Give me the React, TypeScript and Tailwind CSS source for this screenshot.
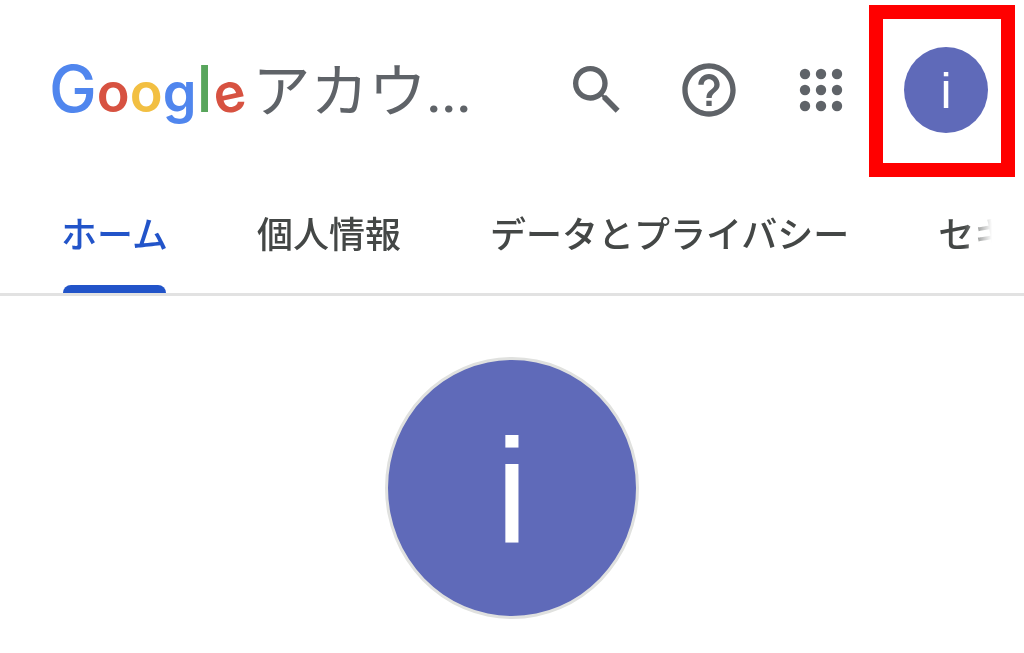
import clsx from "clsx";

const TABS = [
  { label: "ホーム", active: true },
  { label: "個人情報" },
  { label: "データとプライバシー" },
  { label: "セキュリティ" },
];

const DOTS = [5, 21, 37];

function GoogleLogo() {
  return (
    <span className="font-[Inter,sans-serif] text-[54px] leading-[72px] font-semibold">
      <span className="text-[64px] font-medium text-[#5086ee]">G</span>
      <span className="text-[#d75241]">o</span>
      <span className="text-[#f2bf42]">o</span>
      <span className="text-[#5086ee]">g</span>
      <span className="text-[64px] font-medium text-[#58a55c]">l</span>
      <span className="inline-block -rotate-12 leading-none text-[#d75241]">e</span>
    </span>
  );
}

function SearchIcon() {
  return (
    <svg viewBox="0 0 24 24" className="size-16" fill="currentColor" aria-hidden="true">
      <path d="M15.5 14h-.79l-.28-.27A6.47 6.47 0 0 0 16 9.5 6.5 6.5 0 1 0 9.5 16c1.61 0 3.09-.59 4.23-1.57l.27.28v.79l5 4.99L20.49 19l-4.99-5zm-6 0C7.01 14 5 11.99 5 9.5S7.01 5 9.5 5 14 7.01 14 9.5 11.99 14 9.5 14z" />
    </svg>
  );
}

function HelpIcon() {
  return (
    <svg viewBox="0 0 24 24" className="size-16" fill="currentColor" aria-hidden="true">
      <path d="M11 18h2v-2h-2v2zm1-16C6.48 2 2 6.48 2 12s4.48 10 10 10 10-4.48 10-10S17.52 2 12 2zm0 18c-4.41 0-8-3.59-8-8s3.59-8 8-8 8 3.59 8 8-3.59 8-8 8zm0-14c-2.21 0-4 1.79-4 4h2c0-1.1.9-2 2-2s2 .9 2 2c0 2-3 1.75-3 5h2c0-2.25 3-2.5 3-5 0-2.21-1.79-4-4-4z" />
    </svg>
  );
}

function AppsIcon() {
  return (
    <svg viewBox="-11 -11 64 64" className="size-16" fill="currentColor" aria-hidden="true">
      {DOTS.map((y) => DOTS.map((x) => <circle key={`${x}-${y}`} cx={x} cy={y} r="5.2" />))}
    </svg>
  );
}

export default function App() {
  return (
    <div className="min-h-screen bg-white font-['Noto_Sans_CJK_JP',sans-serif]">
      <header className="flex items-start justify-between pt-[5px] pr-[9px] pl-[49px] text-[#5f6368]">
        {/* Brand */}
        <a href="#" className="mt-[46px] flex items-baseline gap-2 whitespace-nowrap">
          <GoogleLogo />
          <span className="text-[58px] leading-[72px]">
            アカウ<span className="font-[Roboto,sans-serif] text-[54px] font-medium">...</span>
          </span>
        </a>

        {/* Actions */}
        <div className="flex items-start">
          <div className="mt-[53px] mr-4 flex gap-12">
            <button type="button" aria-label="検索">
              <SearchIcon />
            </button>
            <button type="button" aria-label="ヘルプ">
              <HelpIcon />
            </button>
            <button type="button" aria-label="Google アプリ">
              <AppsIcon />
            </button>
          </div>
          <div className="border-[14px] border-[#ff0000] pt-7 pr-[13px] pb-[30px] pl-[21px]">
            <button
              type="button"
              className="flex h-[86px] w-[84px] items-center justify-center rounded-[50%] bg-[#5f6ab9] pt-0.5 font-['Liberation_Sans',sans-serif] text-[50px] leading-none text-white"
            >
              i
            </button>
          </div>
        </div>
      </header>

      {/* Tabs */}
      <nav className="border-b-[3px] border-[#e2e2e2]">
        <div className="mr-8 flex gap-[89px] overflow-hidden pl-[61px] [mask-image:linear-gradient(to_right,black_calc(100%_-_28px),transparent)]">
          {TABS.map((tab) => (
            <a
              key={tab.label}
              href="#"
              aria-current={tab.active ? "page" : undefined}
              className={clsx(
                "relative shrink-0 pt-[33px] pb-[39px] text-[36px] leading-[44px] font-medium whitespace-nowrap",
                tab.active ? "text-[#2254c9]" : "text-[#444746]"
              )}
            >
              {tab.label}
              {tab.active && (
                <span className="absolute right-0.5 bottom-0 left-0.5 h-2 rounded-t-lg bg-[#2254c9]" />
              )}
            </a>
          ))}
        </div>
      </nav>

      <main className="flex justify-center pt-[61px]">
        <button
          type="button"
          className="flex h-[262px] w-[254px] items-center justify-center rounded-[50%] border-[3px] border-[#e0e1df] bg-[#5f6ab9] pt-2 font-['Liberation_Sans',sans-serif] text-[148px] leading-none text-white"
        >
          i
        </button>
      </main>
    </div>
  );
}
